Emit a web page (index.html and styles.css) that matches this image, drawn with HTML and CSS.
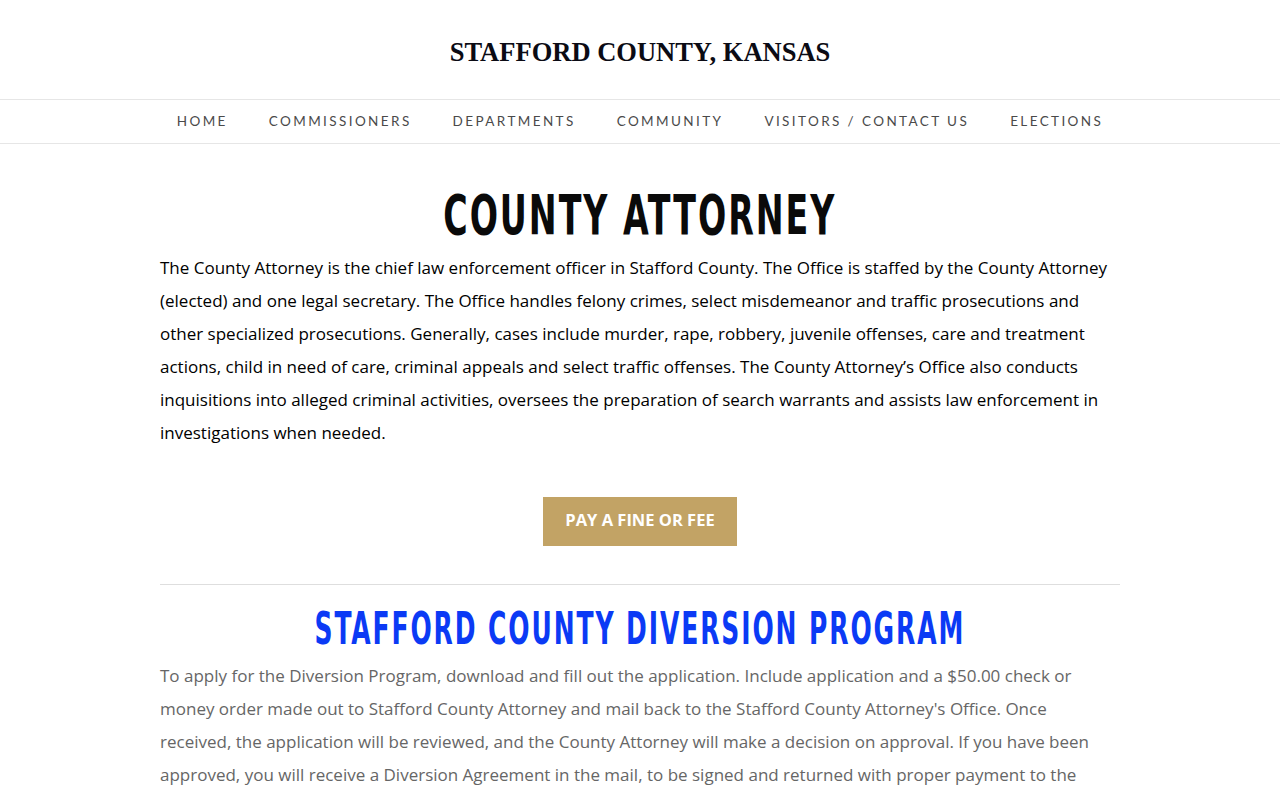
FILE: index.html
```html
<!DOCTYPE html>
<html lang="en">
<head>
<meta charset="utf-8">
<title>County Attorney - Stafford County, Kansas</title>
<link rel="stylesheet" href="styles.css">
</head>
<body>
<header class="site-header">
  <div class="site-title">STAFFORD COUNTY, KANSAS</div>
</header>
<nav class="main-nav">
  <a href="#">HOME</a>
  <a href="#">COMMISSIONERS</a>
  <a href="#">DEPARTMENTS</a>
  <a href="#">COMMUNITY</a>
  <a href="#">VISITORS / CONTACT US</a>
  <a href="#">ELECTIONS</a>
</nav>
<main class="content">
  <h1 class="page-title"><span class="narrow title-narrow">COUNTY ATTORNEY</span></h1>
  <p class="intro">The County Attorney is the chief law enforcement officer in Stafford County. The Office is staffed by the County Attorney (elected) and one legal secretary. The Office handles felony crimes, select misdemeanor and traffic prosecutions and other specialized prosecutions. Generally, cases include murder, rape, robbery, juvenile offenses, care and treatment actions, child in need of care, criminal appeals and select traffic offenses. The County Attorney’s Office also conducts inquisitions into alleged criminal activities, oversees the preparation of search warrants and assists law enforcement in investigations when needed.</p>
  <div class="btn-row"><a class="btn" href="#">PAY A FINE OR FEE</a></div>
  <hr class="divider">
  <h2 class="section-title"><span class="narrow section-narrow">STAFFORD COUNTY DIVERSION PROGRAM</span></h2>
  <p class="body-grey">To apply for the Diversion Program, download and fill out the application. Include application and a $50.00 check or money order made out to Stafford County Attorney and mail back to the Stafford County Attorney's Office. Once received, the application will be reviewed, and the County Attorney will make a decision on approval. If you have been approved, you will receive a Diversion Agreement in the mail, to be signed and returned with proper payment to the Stafford County Attorney's Office.</p>
</main>
</body>
</html>
```

FILE: styles.css
```css
html, body {
  margin: 0;
  padding: 0;
  background: #fff;
}
body {
  font-family: "Open Sans", "Noto Sans", sans-serif;
  color: #000;
}
.site-header {
  height: 99px;
  border-bottom: 1px solid #e6e6e6;
  display: flex;
  align-items: center;
  justify-content: center;
}
.site-title {
  font-family: "Liberation Serif", "DejaVu Serif", serif;
  font-weight: bold;
  font-size: 26.5px;
  letter-spacing: 0;
  color: #0b0b14;
  padding-top: 6px;
}
.main-nav {
  height: 43px;
  border-bottom: 1px solid #e6e6e6;
  display: flex;
  justify-content: center;
  align-items: center;
  gap: 41px;
}
.main-nav a {
  font-family: "Lato", "Open Sans", sans-serif;
  font-size: 13.5px;
  letter-spacing: 2.4px;
  color: #4a4a4a;
  text-decoration: none;
  padding-bottom: 1px;
}
.content {
  width: 960px;
  margin: 0 auto;
  padding-top: 40px;
}
.narrow {
  display: inline-block;
  white-space: nowrap;
  transform-origin: center;
  flex-shrink: 0;
}
.title-narrow {
  transform: scaleX(0.66);
}
.section-narrow {
  transform: scaleX(0.632);
}
.page-title {
  margin: 0;
  display: flex;
  justify-content: center;
  font-family: "DejaVu Sans Condensed", "DejaVu Sans", sans-serif;
  font-weight: bold;
  font-size: 56px;
  line-height: 62px;
  letter-spacing: 3px;
  color: #0a0a0a;
}
.intro {
  margin: 5px 0 0;
  font-size: 17px;
  line-height: 33px;
  color: #000;
}
.btn-row {
  display: flex;
  justify-content: center;
  margin-top: 48px;
}
.btn {
  display: block;
  width: 194px;
  height: 49px;
  line-height: 46px;
  text-align: center;
  background: #c2a365;
  color: #fff;
  font-family: "Open Sans", sans-serif;
  font-weight: bold;
  font-size: 16.5px;
  text-decoration: none;
}
.divider {
  border: 0;
  border-top: 1px solid #dedede;
  margin: 38px 0 0;
}
.section-title {
  margin: 18px 0 0;
  display: flex;
  justify-content: center;
  font-family: "DejaVu Sans Condensed", "DejaVu Sans", sans-serif;
  font-weight: bold;
  font-size: 44px;
  line-height: 52px;
  letter-spacing: 3px;
  color: #0b3af5;
}
.body-grey {
  margin: 4px 0 0;
  font-size: 17px;
  line-height: 33px;
  color: #666;
}
```
